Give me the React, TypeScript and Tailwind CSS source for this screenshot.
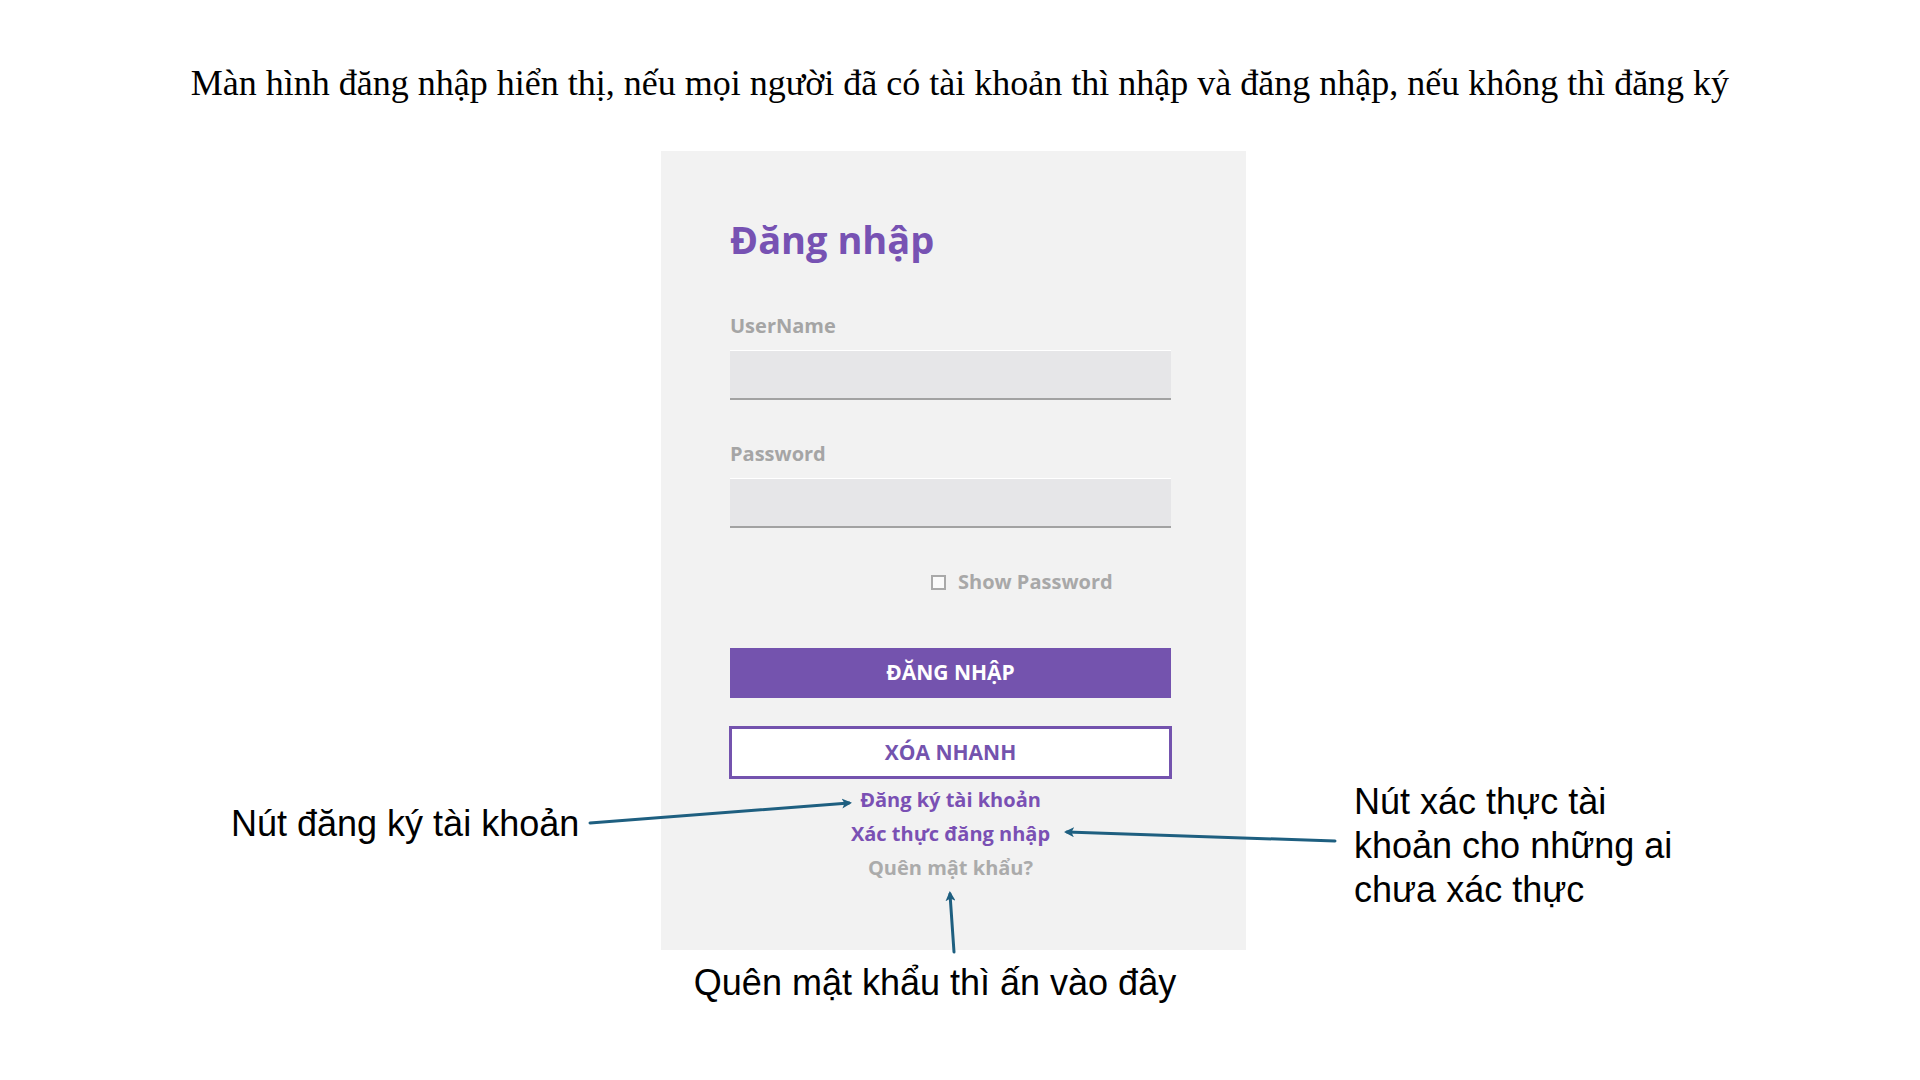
import React from 'react';

// Annotated login screen (document page)
const ARROW = '#1e5f80';

function Arrows() {
  return (
    <svg
      className="pointer-events-none absolute left-0 top-0"
      width={1920}
      height={1080}
      viewBox="0 0 1920 1080"
    >
      <defs>
        <marker id="head" markerWidth="10" markerHeight="10" refX="7" refY="5" orient="auto" markerUnits="userSpaceOnUse">
          <path d="M0,0 L10,5 L0,10 L2.5,5 Z" fill={ARROW} />
        </marker>
      </defs>
      <g stroke={ARROW} strokeWidth={3} strokeLinecap="round">
        <line x1={590} y1={823} x2={849} y2={803} markerEnd="url(#head)" />
        <line x1={1335} y1={841} x2={1067} y2={832} markerEnd="url(#head)" />
        <line x1={954} y1={952} x2={950} y2={894} markerEnd="url(#head)" />
      </g>
    </svg>
  );
}

function Field({ label, type = 'text', top }: { label: string; type?: string; top: string }) {
  return (
    <>
      <label className={`${top} block text-[20px] font-bold leading-[24px] text-[#a5a5a5]`}>{label}</label>
      <input
        type={type}
        className="mt-[12px] h-[50px] w-full border-b-2 border-[#a2a2a2] bg-[#e6e6e8] px-3 text-[18px] outline-none shadow-[inset_0_1px_0_#ffffff]"
      />
    </>
  );
}

function LoginPanel() {
  return (
    <div className="flex h-[799px] flex-col bg-[#f2f2f2] pl-[69px] pr-[75px] pt-[65px] font-['Open_Sans',sans-serif]">
      <h1 className="text-[38px] font-bold leading-[46px] text-[#7752b3]">Đăng nhập</h1>

      <Field label="UserName" top="mt-[52px]" />
      <Field label="Password" type="password" top="mt-[42px]" />

      <label className="mt-[42px] flex items-center gap-[12px] pl-[201px] text-[20px] font-bold leading-[24px] text-[#a8a8a8]">
        <span className="h-[15px] w-[15px] border-2 border-[#a9a9a9] bg-[#fafafa]" />
        Show Password
      </label>

      <button className="mt-[54px] h-[50px] w-full bg-[#7453ae] text-[21px] font-bold text-white">
        ĐĂNG NHẬP
      </button>
      <button className="-mx-px mt-[28px] h-[53px] border-[3px] border-[#7453ae] bg-white text-[21px] font-bold text-[#7453ae]">
        XÓA NHANH
      </button>

      <div className="mt-[4px] flex flex-col items-center text-[20px] font-bold leading-[34px]">
        <a className="text-[#7a50b4]">Đăng ký tài khoản</a>
        <a className="text-[#7a50b4]">Xác thực đăng nhập</a>
        <a className="text-[#ababab]">Quên mật khẩu?</a>
      </div>
    </div>
  );
}

export default function App() {
  return (
    <div className="relative h-[1080px] w-[1920px] overflow-hidden bg-white text-black">
      <p className="pt-[62px] text-center font-['Liberation_Serif','Times_New_Roman',serif] text-[36px] leading-[42px]">
        Màn hình đăng nhập hiển thị, nếu mọi người đã có tài khoản thì nhập và đăng nhập, nếu không thì đăng ký
      </p>

      <div className="mt-[47px] flex font-['Liberation_Sans',Arial,sans-serif] text-[36px]">
        <div className="w-[661px] shrink-0 pl-[231px] pt-[653px] leading-[40px]">Nút đăng ký tài khoản</div>

        <div className="w-[585px] shrink-0">
          <LoginPanel />
          <p className="mt-[13px] pr-[37px] text-center leading-[40px]">Quên mật khẩu thì ấn vào đây</p>
        </div>

        <div className="flex-1 pl-[108px] pt-[629px] leading-[44px]">
          <div>Nút xác thực tài</div>
          <div>khoản cho những ai</div>
          <div>chưa xác thực</div>
        </div>
      </div>

      <Arrows />
    </div>
  );
}
